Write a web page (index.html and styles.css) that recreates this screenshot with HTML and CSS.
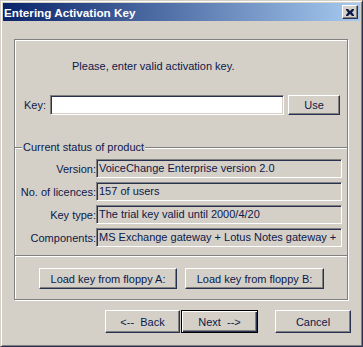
FILE: index.html
```html
<!DOCTYPE html>
<html lang="en">
  <head>
    <meta charset="UTF-8">
    <title>Entering Activation Key</title>
    <link rel="stylesheet" href="styles.css">
  </head>
  <body>
    <div class="window">
      <div class="titlebar">
        <span class="title">Entering Activation Key</span>
        <button class="close">
          <svg width="8" height="7" viewBox="0 0 8 7">
            <path d="M0 0h2l2 2 2-2h2v1l-2 2.5 2 2.5v1h-2l-2-2-2 2h-2v-1l2-2.5-2-2.5z" fill="#0c1848"/>
          </svg>
        </button>
      </div>

      <div class="group">
        <div class="section intro">
          <div class="prompt">Please, enter valid activation key.</div>
          <div class="key-row">
            <label for="key">Key:</label>
            <input id="key" type="text">
            <button class="btn use">Use</button>
          </div>
        </div>

        <div class="section status">
          <span class="legend">Current status of product</span>
          <div class="row">
            <span class="label">Version:</span>
            <span class="field">VoiceChange Enterprise version 2.0</span>
          </div>
          <div class="row">
            <span class="label">No. of licences:</span>
            <span class="field">157 of users</span>
          </div>
          <div class="row">
            <span class="label">Key type:</span>
            <span class="field">The trial key valid until 2000/4/20</span>
          </div>
          <div class="row">
            <span class="label">Components:</span>
            <span class="field">MS Exchange gateway + Lotus Notes gateway +</span>
          </div>
        </div>

        <div class="section floppy">
          <button class="btn floppy-a">Load key from floppy A:</button>
          <button class="btn floppy-b">Load key from floppy B:</button>
        </div>
      </div>

      <div class="actions">
        <button class="btn back">&lt;--&nbsp;&nbsp;Back</button>
        <button class="btn next">Next&nbsp;&nbsp;--&gt;</button>
        <button class="btn cancel">Cancel</button>
      </div>
    </div>
  </body>
</html>
```

FILE: styles.css
```css
* {
  margin: 0;
  padding: 0;
  box-sizing: border-box;
}

body {
  font-family: "Liberation Sans", Arial, sans-serif;
  font-size: 11px;
  color: #0c1848;
  background: #d4d0c8;
}

.window {
  width: 363px;
  height: 347px;
  background: #d4d0c8;
  border: 1px solid;
  border-color: #d4d0c8 #2a3050 #2a3050 #d4d0c8;
  box-shadow: inset 1px 1px #ffffff, inset -1px -1px #808080;
  padding: 2px;
}

.titlebar {
  height: 18px;
  display: flex;
  align-items: center;
  justify-content: space-between;
  padding: 0 2px 0 1px;
  background: linear-gradient(to right, #0a246a, #a6caf0);
}

.title {
  color: #ffffff;
  font-weight: bold;
  font-size: 11.7px;
}

.close {
  width: 16px;
  height: 14px;
  display: flex;
  align-items: center;
  justify-content: center;
  background: #d4d0c8;
  border: 1px solid;
  border-color: #ffffff #2a3050 #2a3050 #ffffff;
  box-shadow: inset -1px -1px #808080;
}

.group {
  width: 334px;
  margin: 18px 0 0 11px;
  border: 1px solid #808080;
  box-shadow: inset 1px 1px #ffffff, 1px 1px #ffffff;
}

.intro {
  height: 107px;
  padding: 20px 0 0 9px;
}

.prompt {
  padding-left: 48px;
  line-height: 13px;
}

.key-row {
  display: flex;
  align-items: center;
  margin-top: 22px;
}

.key-row label {
  width: 26px;
}

.key-row input {
  width: 234px;
  height: 20px;
  background: #ffffff;
  border: 1px solid;
  border-color: #808080 #ffffff #ffffff #808080;
  box-shadow: inset 1px 1px #2a3050, inset -1px -1px #d4d0c8;
  outline: none;
}

.btn {
  font-family: inherit;
  font-size: 11px;
  color: #0c1848;
  background: #d4d0c8;
  border: 1px solid;
  border-color: #ffffff #2a3050 #2a3050 #ffffff;
  box-shadow: inset -1px -1px #808080;
}

.use {
  width: 52px;
  height: 20px;
  margin-left: 4px;
}

.status {
  position: relative;
  height: 109px;
  padding-top: 11px;
  border-top: 1px solid #808080;
  border-bottom: 1px solid #808080;
  box-shadow: inset 0 1px #ffffff, 0 1px #ffffff;
  display: flex;
  flex-direction: column;
  gap: 4px;
}

.legend {
  position: absolute;
  top: -7px;
  left: 7px;
  padding: 0 1px;
  background: #d4d0c8;
  line-height: 13px;
}

.row {
  display: flex;
  align-items: center;
  height: 19px;
}

.label {
  width: 81px;
  text-align: right;
  white-space: nowrap;
}

.field {
  width: 246px;
  height: 19px;
  line-height: 17px;
  padding-left: 2px;
  white-space: nowrap;
  overflow: hidden;
  border: 1px solid;
  border-color: #808080 #ffffff #ffffff #808080;
  box-shadow: inset 1px 1px #2a3050, inset -1px -1px #d4d0c8;
}

.floppy {
  display: flex;
  gap: 8px;
  padding: 12px 0 0 24px;
  height: 43px;
}

.floppy .btn {
  height: 21px;
}

.floppy-a {
  width: 138px;
}

.floppy-b {
  width: 139px;
}

.actions {
  display: flex;
  justify-content: flex-end;
  padding-right: 9px;
  margin-top: 10px;
}

.actions .btn {
  height: 23px;
  width: 75px;
}

.actions .next {
  width: 77px;
  margin-left: 1px;
  border: 1px solid #000000;
  box-shadow: inset 1px 1px #ffffff, inset -1px -1px #2a3050, inset -2px -2px #808080;
}

.actions .cancel {
  width: 76px;
  margin-left: 17px;
}
```
